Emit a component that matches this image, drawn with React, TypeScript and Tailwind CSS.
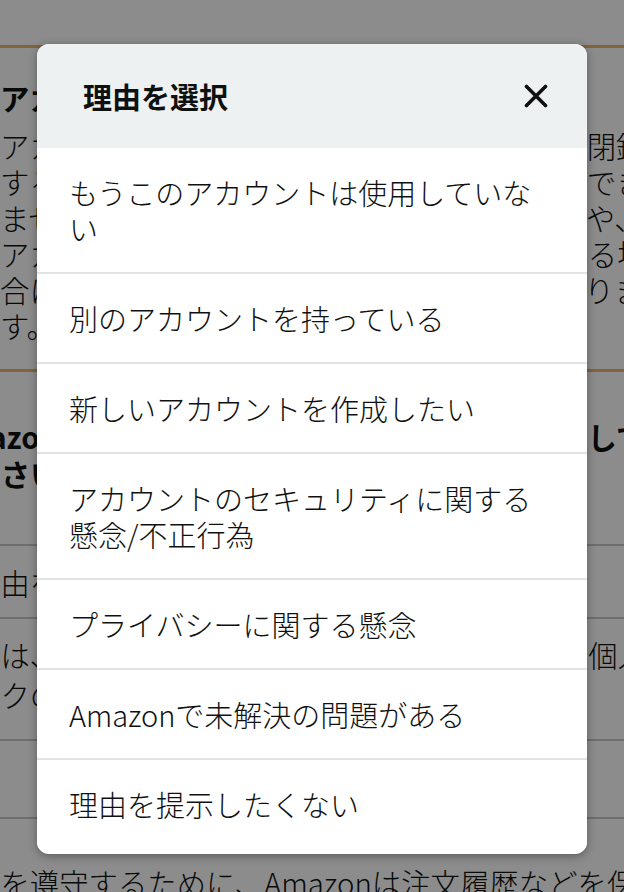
import { useState } from "react";

const reasons = [
  "もうこのアカウントは使用していない",
  "別のアカウントを持っている",
  "新しいアカウントを作成したい",
  "アカウントのセキュリティに関する懸念/不正行為",
  "プライバシーに関する懸念",
  "Amazonで未解決の問題がある",
  "理由を提示したくない",
];

const introLines = [
  "アカウントを閉鎖すると、全てのサービスが閉鎖されます。",
  "すると、アカウントを二度と利用することはできません。",
  "ません。また、デジタルコンテンツ購入履歴や、",
  "アカウントに未使用のギフトカード残高がある場合は",
  "合には、その残高もすべて失効することになります。",
  "す。",
];

function ClosePage() {
  // the page behind the overlay, cut off on both sides
  return (
    <div className="-ml-[29px] w-[760px] text-[29.4px] font-light text-[#0f1111] whitespace-nowrap">
      <div className="h-[45px]" />
      <div className="h-[3px] bg-[#eeb46c]" />

      <div className="pl-[29px] pt-[31px]">
        <h2 className="font-bold leading-[36px]">アカウントの閉鎖について</h2>
        <p className="mt-[12px] leading-[36px]">
          {introLines.map((line) => (
            <span key={line} className="block">
              {line}
            </span>
          ))}
        </p>
      </div>

      <div className="mt-[26px] h-[3px] bg-[#eeb46c]" />

      <h2 className="-ml-[29px] pt-[46px] font-bold leading-[37px]">
        <span className="block">Amazonアカウントの閉鎖を希望する理由を選択して</span>
        <span className="block">ください。</span>
      </h2>

      <div className="mt-[52px] h-[2px] bg-[#c6c6c6]" />
      <div className="pt-[18px] pb-[17px] leading-[36px]">理由を選択</div>
      <div className="h-[2px] bg-[#c6c6c6]" />

      <p className="pt-[15px] pb-[25px] leading-[40px]">
        <span className="block">私は、閉鎖するアカウントに紐づけられた私の個人情報やチェ</span>
        <span className="block">ックの履歴が削除されることに同意します。</span>
      </p>

      <div className="h-[2px] bg-[#c6c6c6]" />
      <div className="h-[76px]" />
      <div className="h-[2px] bg-[#c6c6c6]" />

      <p className="pt-[45px] leading-[36px]">法を遵守するために、Amazonは注文履歴などを保持します。</p>
    </div>
  );
}

function ReasonDialog() {
  const [selected, setSelected] = useState<string | null>(null);

  return (
    <div className="w-[550px] overflow-hidden rounded-[12px] bg-white pb-[6px] shadow-[0_2px_10px_rgba(0,0,0,0.35)]">
      {/* Header */}
      <div className="flex h-[104px] items-center justify-between bg-[#eef1f1] pl-[46px] pr-[39px]">
        <h3 className="text-[29px] font-bold leading-none text-[#0f1111]">理由を選択</h3>
        <button aria-label="閉じる" className="flex h-[24px] w-[24px] items-center justify-center">
          <svg width="24" height="24" viewBox="0 0 24 24" fill="none">
            <path d="M2.5 2.5 21.5 21.5M21.5 2.5 2.5 21.5" stroke="#0f1111" strokeWidth="3.6" strokeLinecap="round" />
          </svg>
        </button>
      </div>

      {/* Options */}
      <ul className="divide-y-2 divide-[#e0e3e3]">
        {reasons.map((reason) => (
          <li
            key={reason}
            onClick={() => setSelected(reason)}
            className={`px-[32px] py-[26px] text-[29px] font-light leading-[36px] text-[#0f1111] ${
              selected === reason ? "bg-[#f7fafa]" : "bg-white"
            }`}
          >
            {reason}
          </li>
        ))}
      </ul>
    </div>
  );
}

export default function App() {
  return (
    <div className="relative h-[892px] w-[624px] overflow-hidden bg-white font-['Noto_Sans_CJK_JP','Noto_Sans',sans-serif]">
      <ClosePage />

      {/* Overlay */}
      <div className="absolute inset-0 flex items-start justify-center bg-black/45 pt-[44px]">
        <ReasonDialog />
      </div>
    </div>
  );
}
